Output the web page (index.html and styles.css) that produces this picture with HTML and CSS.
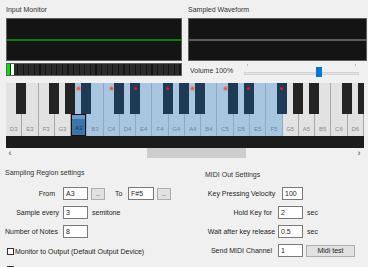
FILE: index.html
```html
<!DOCTYPE html>
<html lang="en">
<head>
    <meta charset="UTF-8">
    <meta name="viewport" content="width=device-width, initial-scale=1.0">
    <title>Sampler</title>
    <link rel="stylesheet" href="styles.css">
</head>
<body>
<div class="top">
    <section class="panel">
        <div class="caption">Input Monitor</div>
        <div class="scope"><div class="trace trace-green"></div></div>
        <div class="meter"><span class="meter-green"></span><span class="meter-peak"></span></div>
    </section>
    <section class="panel">
        <div class="caption">Sampled Waveform</div>
        <div class="scope"><div class="trace trace-gray"></div></div>
        <div class="volume">
            <span class="volume-label">Volume 100%</span>
            <div class="slider">
                <span class="tick tick-left"></span>
                <span class="tick tick-right"></span>
                <span class="track"></span>
                <span class="thumb"></span>
            </div>
        </div>
    </section>
</div>

<div class="piano">
    <div class="keys" id="keys"></div>
</div>

<div class="scrollbar">
    <span class="arrow arrow-left">&#8249;</span>
    <div class="scroll-track"><div class="scroll-thumb"></div></div>
    <span class="arrow arrow-right">&#8250;</span>
</div>

<div class="settings">
    <div class="col col-left">
        <div class="heading">Sampling Region settings</div>
        <div class="row row-first">
            <span class="lbl lbl-from">From</span>
            <span class="field">A3</span>
            <button class="dots">..</button>
            <span class="to">To</span>
            <span class="field field-to">F#5</span>
            <button class="dots">..</button>
        </div>
        <div class="row">
            <span class="lbl">Sample every</span>
            <span class="field">3</span>
            <span class="unit">semitone</span>
        </div>
        <div class="row">
            <span class="lbl lbl-notes">Number of Notes</span>
            <span class="field">8</span>
        </div>
        <div class="check-row check-first">
            <span class="check"></span>
            <span>Monitor to Output (Default Output Device)</span>
        </div>
        <div class="check-row">
            <span class="check"></span>
            <span>Save sampled waveform to files</span>
        </div>
    </div>
    <div class="col col-right">
        <div class="heading">MIDI Out Settings</div>
        <div class="row row-first">
            <span class="mlbl">Key Pressing Velocity</span>
            <span class="field field-velocity">100</span>
        </div>
        <div class="row">
            <span class="mlbl mlbl-right">Hold Key for</span>
            <span class="field">2</span>
            <span class="unit">sec</span>
        </div>
        <div class="row">
            <span class="mlbl">Wait after key release</span>
            <span class="field">0.5</span>
            <span class="unit">sec</span>
        </div>
        <div class="row">
            <span class="mlbl">Send MIDI Channel</span>
            <span class="field">1</span>
            <button class="midi-test">Midi test</button>
        </div>
    </div>
</div>

<script>
    const notes = ["D3","E3","F3","G3","A3","B3","C4","D4","E4","F4","G4","A4","B4","C5","D5","E5","F5","G5","A5","B5","C6","D6"];
    const hasSharp = "CDFGA";
    const whiteDots = ["A3","C4","A4","C5"];
    const sharpDots = ["D4","F4","D5","F5"];
    const keysE1 = document.getElementById("keys");

    notes.forEach((note, i) => {
        const key = document.createElement("div");
        key.classList.add("key");
        if (i >= 4 && i <= 16) key.classList.add("in-region");
        if (note === "A3") key.classList.add("selected");

        if (whiteDots.includes(note)) {
            const dot = document.createElement("i");
            dot.classList.add("dot", "dot-white");
            key.appendChild(dot);
        }

        if (hasSharp.includes(note[0])) {
            const sharp = document.createElement("span");
            sharp.classList.add("sharp");
            if (sharpDots.includes(note)) {
                const dot = document.createElement("i");
                dot.classList.add("dot", "dot-black");
                sharp.appendChild(dot);
            }
            key.appendChild(sharp);
        }

        const name = document.createElement("span");
        name.classList.add("name");
        name.textContent = note;
        key.appendChild(name);

        keysE1.appendChild(key);
    });
</script>
</body>
</html>
```

FILE: styles.css
```css
body {
    margin: 0;
    background-color: #f0f0f0;
    font-family: "Liberation Sans", Arial, sans-serif;
    font-size: 7px;
    color: #1e1e1e;
    width: 368px;
    height: 267px;
    overflow: hidden;
}

/* scopes */
.top {
    display: grid;
    grid-template-columns: 176px 179px;
    column-gap: 6px;
    height: 83px;
    box-sizing: border-box;
    padding: 6px 0 0 6px;
}
.caption {
    height: 8px;
    line-height: 8px;
    margin-bottom: 4px;
    color: #333;
}
.scope {
    height: 43px;
    box-sizing: border-box;
    border: 1px solid #5e5e5e;
    background-color: #141414;
    display: flex;
    align-items: center;
}
.trace {
    width: 100%;
    height: 2px;
}
.trace-green {
    background-color: #0f7d0f;
}
.trace-gray {
    background-color: #5c5c5c;
}
.meter {
    margin-top: 2px;
    height: 13px;
    box-sizing: border-box;
    border: 1px solid #5e5e5e;
    background: repeating-linear-gradient(90deg, #2a2a2a 0 4.4px, #151515 4.4px 5.6px);
    display: flex;
    gap: 1px;
}
.meter-green {
    width: 3px;
    background-color: #00e400;
}
.meter-peak {
    width: 3px;
    background-color: #fafafa;
}

/* volume */
.volume {
    display: flex;
    align-items: center;
    height: 19px;
}
.volume-label {
    width: 54px;
    padding-left: 2px;
    color: #333;
}
.slider {
    position: relative;
    width: 115px;
    height: 19px;
}
.tick {
    position: absolute;
    top: 3px;
    width: 1px;
    height: 2px;
    background-color: #b8b8b8;
}
.tick-left { left: 3px; }
.tick-right { left: 111px; }
.track {
    position: absolute;
    top: 11px;
    left: 0;
    right: 0;
    height: 3px;
    background-color: #e4e4e4;
    border: 1px solid #d4d4d4;
    box-sizing: border-box;
}
.thumb {
    position: absolute;
    top: 6px;
    left: 72px;
    width: 6px;
    height: 10px;
    background-color: #0078d7;
}

/* piano */
.piano {
    margin-left: 6px;
    width: 358px;
    height: 65px;
    overflow: hidden;
    background-color: #1c1c1c;
}
.keys {
    display: flex;
    height: 53px;
}
.key {
    position: relative;
    flex: 1 1 0;
    background-color: #e2e2e2;
    border-right: 1px solid #a8a8a8;
    display: flex;
    flex-direction: column;
    justify-content: flex-end;
}
.key.in-region {
    background-color: #a9c6e0;
    border-right-color: #8ea9c2;
}
.name {
    height: 22px;
    box-sizing: border-box;
    display: flex;
    align-items: flex-end;
    justify-content: center;
    padding-bottom: 3px;
    font-size: 6px;
    line-height: 7px;
    color: #8a8a8a;
}
.in-region .name {
    color: #6c87a2;
}
.selected .name {
    border: 1px solid #111;
    background: linear-gradient(#6a9ccb 0 4px, #3b76ad 4px);
    color: #173351;
}
.sharp {
    position: absolute;
    z-index: 1;
    top: 0;
    right: -5px;
    width: 10px;
    height: 31px;
    background-color: #242424;
    display: flex;
    justify-content: center;
}
.in-region .sharp {
    background-color: #1e3a57;
}
.dot {
    position: absolute;
    top: 4px;
    width: 3px;
    height: 3px;
    border-radius: 50%;
}
.dot-white {
    z-index: 2;
    left: 50%;
    margin-left: -1.5px;
    background-color: #f05a3c;
    box-shadow: 0 0 1px 1px rgba(240, 110, 80, .45);
}
.dot-black {
    background-color: #f0141e;
}

/* scrollbar */
.scrollbar {
    margin-left: 6px;
    width: 358px;
    height: 10px;
    display: flex;
    align-items: center;
}
.arrow {
    font-size: 9px;
    line-height: 10px;
    color: #707070;
    text-align: center;
    font-weight: bold;
}
.arrow-left { width: 8px; }
.arrow-right { width: 10px; }
.scroll-track {
    flex: 1;
    height: 10px;
}
.scroll-thumb {
    margin-left: 133px;
    width: 99px;
    height: 10px;
    background-color: #cdcdcd;
}

/* settings */
.settings {
    display: grid;
    grid-template-columns: 205px 1fr;
}
.col {
    display: flex;
    flex-direction: column;
    gap: 6px;
}
.col-left {
    padding: 11px 0 0 5px;
}
.col-right {
    padding-top: 13px;
}
.heading {
    height: 8px;
    line-height: 8px;
    color: #333;
}
.col-left .heading {
    margin-bottom: 4px;
}
.col-right .heading {
    margin-bottom: 2px;
}
.row {
    display: flex;
    align-items: center;
    height: 13px;
}
.lbl {
    width: 58px;
    box-sizing: border-box;
    padding-right: 4px;
    text-align: right;
    white-space: nowrap;
}
.lbl-from {
    padding-right: 8px;
}
.lbl-notes {
    padding-right: 6px;
}
.field {
    width: 25px;
    height: 13px;
    box-sizing: border-box;
    border: 1px solid #7a7a7a;
    background-color: #fff;
    padding-left: 2px;
    line-height: 11px;
}
.field-to {
    width: 26px;
}
.dots {
    margin-left: 3px;
    width: 14px;
    height: 12px;
    padding: 0;
    border: 1px solid #adadad;
    background-color: #e1e1e1;
    font-family: inherit;
    font-size: 7px;
    line-height: 8px;
    color: #333;
}
.to {
    margin-left: 10px;
    width: 13px;
}
.unit {
    margin-left: 4px;
}
.check-row {
    display: flex;
    align-items: center;
    height: 12px;
    margin-left: 2px;
    white-space: nowrap;
}
.check-first {
    margin-top: 1px;
}
.check {
    width: 7px;
    height: 7px;
    box-sizing: border-box;
    border: 1px solid #333;
    background-color: #fff;
    margin-right: 1px;
}
.mlbl {
    width: 73px;
    text-align: center;
    white-space: nowrap;
}
.mlbl-right {
    text-align: right;
    padding-right: 6px;
    box-sizing: border-box;
}
.field-velocity {
    margin-left: 4px;
    width: 21px;
}
.midi-test {
    margin-left: 3px;
    width: 49px;
    height: 12px;
    padding: 0;
    border: 1px solid #adadad;
    background-color: #e1e1e1;
    font-family: inherit;
    font-size: 7px;
    color: #222;
}
```
